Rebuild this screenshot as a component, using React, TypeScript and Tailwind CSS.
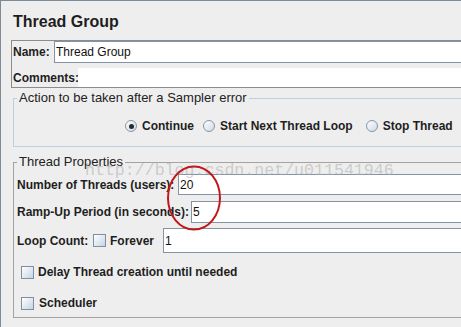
import React from "react";

const label = "text-[12px] font-bold leading-[14px] text-[#1e1e1e] whitespace-nowrap";
const field = "flex-1 border border-[#8494a4] bg-white pl-[1px] text-[12px] leading-[14px] text-[#111] flex items-center";

function Radio({ checked, text }: { checked?: boolean; text: string }) {
  return (
    <div className="flex items-center gap-[5px]">
      <span className="flex h-[12px] w-[12px] items-center justify-center rounded-full border border-[#8796a6] bg-gradient-to-br from-white to-[#cfd9e4]">
        {checked ? <span className="h-[5px] w-[5px] rounded-full bg-[#2a2a2a]" /> : null}
      </span>
      <span className={label}>{text}</span>
    </div>
  );
}

function Check() {
  return (
    <span className="block h-[13px] w-[13px] shrink-0 border border-[#7f8fa0] bg-gradient-to-br from-white to-[#c7d4e2]" />
  );
}

export default function App() {
  return (
    <div className="relative h-[327px] w-[461px] overflow-hidden border-l border-t border-[#7d8b99] bg-[#eeeeee] font-['Liberation_Sans',Arial,sans-serif]">
      <div className="h-[39px] pl-[12px] pt-[11px] text-[16px] font-bold leading-[20px] text-[#1e1e1e]">
        Thread Group
      </div>

      {/* name / comments */}
      <div className="ml-[10px] w-[470px] border border-[#8c8c8c]">
        <div className="flex h-[22px]">
          <div className={`${label} w-[42px] pl-[1px] flex items-center`}>Name:</div>
          <div className={field}>Thread Group</div>
        </div>
        <div className="mt-[5px] flex h-[19px]">
          <div className={`${label} w-[66px] pl-[1px] flex items-center`}>Comments:</div>
          <div className="flex-1 bg-white" />
        </div>
      </div>

      {/* sampler error */}
      <fieldset className="ml-[12px] mt-[3px] w-[470px] border border-[#b8cfe5] pb-[12px]">
        <legend className="ml-[3px] px-[2px] text-[13px] leading-[14px] text-[#222]">
          Action to be taken after a Sampler error
        </legend>
        <div className="mt-[13px] flex h-[16px] items-center pl-[111px]">
          <Radio checked text="Continue" />
          <div className="ml-[9px]">
            <Radio text="Start Next Thread Loop" />
          </div>
          <div className="ml-[13px]">
            <Radio text="Stop Thread" />
          </div>
        </div>
      </fieldset>

      {/* thread properties */}
      <fieldset className="ml-[12px] mt-[8px] w-[470px] border border-[#a3a3a3] pb-[4px]">
        <legend className="ml-[3px] px-[2px] text-[13px] leading-[14px] text-[#222]">Thread Properties</legend>
        <div className="mt-[5px] flex h-[21px]">
          <div className={`${label} w-[164px] pl-[3px] flex items-center`}>Number of Threads (users):</div>
          <div className={field}>20</div>
        </div>
        <div className="mt-[6px] flex h-[22px]">
          <div className={`${label} w-[177px] pl-[3px] flex items-center`}>Ramp-Up Period (in seconds):</div>
          <div className={field}>5</div>
        </div>
        <div className="mt-[5px] flex h-[25px] items-center">
          <div className={`${label} w-[79px] pl-[3px]`}>Loop Count:</div>
          <Check />
          <div className={`${label} ml-[4px] w-[53px]`}>Forever</div>
          <div className={`${field} h-[25px]`}>1</div>
        </div>
        <div className="mt-[9px] flex h-[20px] items-center gap-[4px] pl-[7px]">
          <Check />
          <span className={label}>Delay Thread creation until needed</span>
        </div>
        <div className="mt-[11px] flex h-[20px] items-center gap-[5px] pl-[7px]">
          <Check />
          <span className={label}>Scheduler</span>
        </div>
      </fieldset>

      {/* watermark */}
      <div className="pointer-events-none absolute left-[84px] top-[160px] font-['Liberation_Mono',monospace] text-[16.6px] leading-[20px] text-[#a8a8a8]/50">
        http://blog.csdn.net/u011541946
      </div>

      {/* red annotation */}
      <svg className="pointer-events-none absolute left-[164px] top-[163px]" width="58" height="68" viewBox="0 0 58 68">
        <ellipse cx="29" cy="34" rx="26" ry="31.5" fill="none" stroke="#c0171c" strokeWidth="2" />
      </svg>
    </div>
  );
}
